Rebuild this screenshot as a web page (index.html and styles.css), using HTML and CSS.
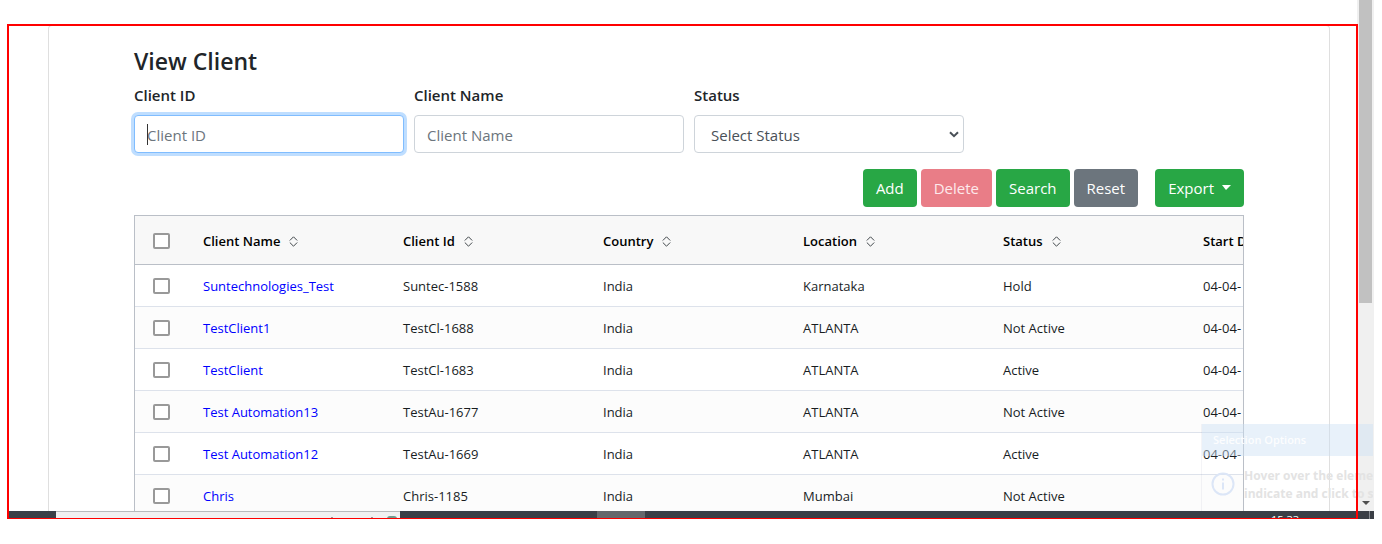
FILE: index.html
```html
<!DOCTYPE html>
<html lang="en">
<head>
<meta charset="utf-8">
<title>View Client</title>
<link rel="stylesheet" href="styles.css">
</head>
<body>
<div class="screen">
  <div class="window">
    <main class="page">
      <section class="card">
        <h1 class="title">View Client</h1>
        <form class="filters">
          <div class="field">
            <label for="client-id">Client ID</label>
            <div class="control"><input class="input active" id="client-id" type="text" placeholder="Client ID"><span class="caret"></span></div>
          </div>
          <div class="field">
            <label for="client-name">Client Name</label>
            <div class="control"><input class="input" id="client-name" type="text" placeholder="Client Name"></div>
          </div>
          <div class="field">
            <label for="status">Status</label>
            <div class="control">
              <select class="input select" id="status"><option>Select Status</option></select>
              <svg class="chevron" width="10" height="7" viewBox="0 0 10 7"><path d="M1 1.2 5 5.2 9 1.2" fill="none" stroke="#495057" stroke-width="2"/></svg>
            </div>
          </div>
        </form>
        <div class="actions">
          <button class="btn green" type="button">Add</button>
          <button class="btn red" type="button" disabled>Delete</button>
          <button class="btn green" type="button">Search</button>
          <button class="btn gray" type="button">Reset</button>
          <button class="btn green export" type="button">Export<span class="drop"></span></button>
        </div>
        <div class="grid">
          <table class="table">
            <colgroup><col class="col-check"><col class="col"><col class="col"><col class="col"><col class="col"><col class="col"><col class="col"></colgroup>
            <thead>
              <tr>
                <th><input class="check" type="checkbox" aria-label="Select all"></th>
                <th>Client Name<svg class="sort" viewBox="0 0 9 11"><path d="M.8 4.5 4.5.8 8.2 4.5M.8 6.5 4.5 10.2 8.2 6.5"/></svg></th>
                <th>Client Id<svg class="sort" viewBox="0 0 9 11"><path d="M.8 4.5 4.5.8 8.2 4.5M.8 6.5 4.5 10.2 8.2 6.5"/></svg></th>
                <th>Country<svg class="sort" viewBox="0 0 9 11"><path d="M.8 4.5 4.5.8 8.2 4.5M.8 6.5 4.5 10.2 8.2 6.5"/></svg></th>
                <th>Location<svg class="sort" viewBox="0 0 9 11"><path d="M.8 4.5 4.5.8 8.2 4.5M.8 6.5 4.5 10.2 8.2 6.5"/></svg></th>
                <th>Status<svg class="sort" viewBox="0 0 9 11"><path d="M.8 4.5 4.5.8 8.2 4.5M.8 6.5 4.5 10.2 8.2 6.5"/></svg></th>
                <th>Start D</th>
              </tr>
            </thead>
            <tbody>
              <tr><td><input class="check" type="checkbox" aria-label="Select Suntechnologies_Test"></td><td><a href="#">Suntechnologies_Test</a></td><td>Suntec-1588</td><td>India</td><td>Karnataka</td><td>Hold</td><td>04-04-</td></tr>
              <tr><td><input class="check" type="checkbox" aria-label="Select TestClient1"></td><td><a href="#">TestClient1</a></td><td>TestCl-1688</td><td>India</td><td>ATLANTA</td><td>Not Active</td><td>04-04-</td></tr>
              <tr><td><input class="check" type="checkbox" aria-label="Select TestClient"></td><td><a href="#">TestClient</a></td><td>TestCl-1683</td><td>India</td><td>ATLANTA</td><td>Active</td><td>04-04-</td></tr>
              <tr><td><input class="check" type="checkbox" aria-label="Select Test Automation13"></td><td><a href="#">Test Automation13</a></td><td>TestAu-1677</td><td>India</td><td>ATLANTA</td><td>Not Active</td><td>04-04-</td></tr>
              <tr><td><input class="check" type="checkbox" aria-label="Select Test Automation12"></td><td><a href="#">Test Automation12</a></td><td>TestAu-1669</td><td>India</td><td>ATLANTA</td><td>Active</td><td>04-04-</td></tr>
              <tr><td><input class="check" type="checkbox" aria-label="Select Chris"></td><td><a href="#">Chris</a></td><td>Chris-1185</td><td>India</td><td>Mumbai</td><td>Not Active</td><td></td></tr>
            </tbody>
          </table>
        </div>
      </section>
    </main>
    <div class="scrollbar"><div class="thumb"></div><div class="arrow"></div></div>
  </div>
  <footer class="taskbar">
    <div class="searchbox"><i class="speck"></i><i class="speck"></i><i class="orb"></i></div>
    <div class="task"></div>
    <div class="clock">15:33</div>
    <div class="divider"></div>
  </footer>
  <aside class="hint">
    <div class="hint-head">Selection Options</div>
    <div class="hint-body">
      <svg class="info" viewBox="0 0 24 24"><circle cx="12" cy="12" r="10.5"/><path d="M12 10.5v7M12 6.5v2"/></svg>
      <p>Hover over the eleme<br>indicate and click to s</p>
    </div>
  </aside>
  <div class="selection"></div>
</div>
</body>
</html>
```
FILE: styles.css
```css
* { box-sizing: border-box; }
body { margin: 0; background: #fff; color: #212529; font-family: "Open Sans", "Noto Sans", sans-serif; font-size: 15px; }
.screen { position: relative; display: flex; flex-direction: column; height: calc(100vh - 25px); margin-right: 8px; overflow: hidden; }
.window { flex: 1; min-height: 0; display: flex; }
.page { flex: 1; min-width: 0; overflow: hidden; padding: 25px 27px 0 48px; }
.card { border: 1px solid #dfdfdf; border-bottom: 0; border-radius: 4px 4px 0 0; padding: 19px 85px 0; }
.title { margin: 0; font-size: 23px; line-height: 32px; font-weight: 600; }
.filters { display: flex; gap: 10px; padding-top: 6px; }
.field { flex: 0 1 270px; }
.field label { display: block; line-height: 24px; margin-bottom: 8px; font-weight: 600; }
.control { position: relative; }
.input { display: block; width: 100%; height: 38px; padding: 2px 12px 0; border: 1px solid #ced4da; border-radius: 4px; background: #fff; color: #495057; font: inherit; outline: 0; }
.input::placeholder { color: #6c757d; opacity: 1; }
.active { border-color: #80bdff; box-shadow: 0 0 0 3px #bfdeff; }
.caret { position: absolute; left: 13px; top: 9px; width: 1px; height: 21px; background: #333; }
.select { appearance: none; padding-left: 16px; }
.chevron { position: absolute; right: 5px; top: 16px; pointer-events: none; }
.actions { display: flex; justify-content: flex-end; gap: 4px; padding: 16px 0 8px; }
.btn { height: 38px; padding: 0 13px; border: 0; border-radius: 4px; color: #fff; font: inherit; }
.green { background: #28a745; }
.red { background: #e97d87; color: #fde9eb; }
.gray { background: #6c757d; }
.export { margin-left: 13px; }
.drop { display: inline-block; margin-left: 8px; vertical-align: 4px; border: 5px solid transparent; border-top-color: #fff; border-bottom: 0; border-left-width: 4px; }
.grid { overflow: hidden; border: 1px solid #babfc7; border-bottom: 0; }
.table { width: 1251px; table-layout: fixed; border-collapse: separate; border-spacing: 0; font-size: 13px; color: #181d1f; }
.col-check { width: 51px; }
.col { width: 200px; }
.table th, .table td { height: 42px; padding: 0 0 0 17px; text-align: left; white-space: nowrap; border-bottom: 1px solid #dde2eb; }
.table th { height: 49px; padding-top: 1px; background: #f8f8f8; border-bottom-color: #babfc7; font-weight: 600; color: #000; }
.table tr:nth-child(even) td { background: #fcfcfc; }
.table a { color: #00f; text-decoration: none; }
.check { display: block; appearance: none; width: 17px; height: 16px; margin: 0 0 0 1px; border: 2px solid #999; border-radius: 2px; background: #fff; }
.sort { width: 9px; height: 11px; margin-left: 9px; vertical-align: -1px; fill: none; stroke: #41474b; }
.scrollbar { display: flex; flex-direction: column; justify-content: space-between; align-items: center; width: 17px; background: #f0f0f0; padding: 0 2px 6px; }
.thumb { width: 100%; height: 60%; background: #c1c1c1; }
.arrow { border: 4px solid transparent; border-top-color: #505050; border-bottom: 0; }
.taskbar { display: flex; height: 8px; margin-left: 8px; overflow: hidden; background: #3b3f46; }
.searchbox { display: flex; justify-content: flex-end; align-items: flex-end; width: 344px; margin-left: 48px; padding-right: 3px; border-top: 1px solid #b8babc; background: #f1f1f1; overflow: hidden; }
.speck { width: 2px; height: 2px; margin-right: 38px; background: #999; }
.speck + .speck { margin-right: 14px; }
.orb { width: 10px; height: 3px; border-radius: 5px 5px 0 0; background: #71998e; }
.task { width: 48px; margin-left: 197px; background: #65686c; }
.clock { margin-left: auto; padding-top: 3px; font-size: 11px; line-height: 11px; color: #fff; }
.divider { width: 1px; margin: 0 4px 0 70px; background: #878b91; }
.hint { position: absolute; right: 1px; bottom: 8px; width: 172px; height: 87px; overflow: hidden; border-left: 1px solid rgba(120, 120, 150, .08); }
.hint-head { height: 32px; padding-left: 11px; background: rgba(205, 224, 245, .45); color: rgba(255, 255, 255, .9); font-size: 11px; font-weight: 600; line-height: 32px; }
.hint-body { display: flex; gap: 9px; padding: 11px 0 0 9px; color: #e3e3e3; font-size: 12px; font-weight: 700; line-height: 18px; white-space: nowrap; }
.hint-body p { margin: 0; }
.info { flex: none; width: 24px; height: 24px; margin-top: 5px; fill: none; stroke: #dce6f7; stroke-width: 2; }
.selection { position: absolute; inset: 24px 16px 0 7px; border: 2px solid #f00; border-bottom-width: 1px; pointer-events: none; }
```
